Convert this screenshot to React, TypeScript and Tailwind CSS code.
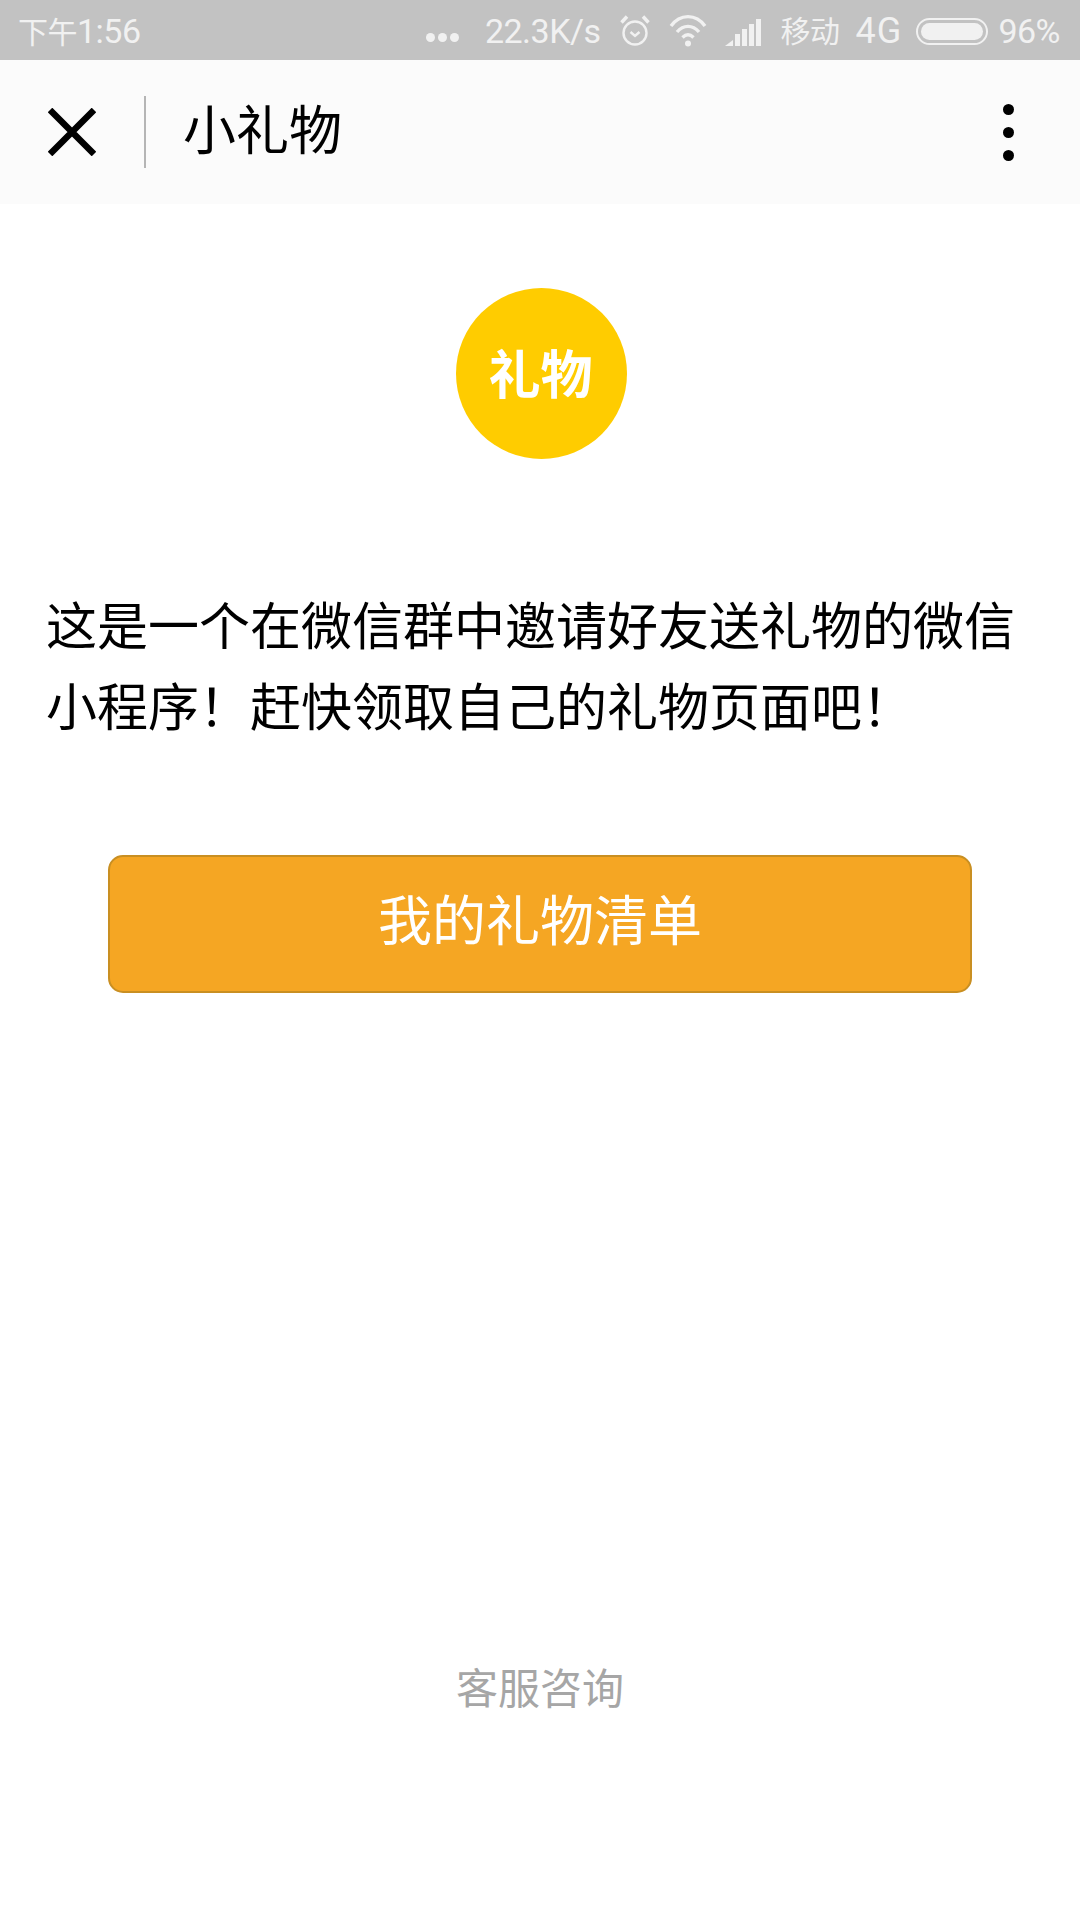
const FONT = "font-['Roboto','Noto_Sans_CJK_SC',sans-serif]";

function AlarmIcon() {
  return (
    <svg viewBox="0 0 32 34" className="w-[32px] h-[34px]" fill="none" stroke="#f1f1f1" strokeWidth="2.4">
      <circle cx="16" cy="19" r="11.5" />
      <path d="M11.5 18l4.500 4 4.500-4" />
      <path d="M2.5 8.500 8 2.500M29.500 8.500 24 2.500" strokeWidth="3.4" />
    </svg>
  );
}

function WifiIcon() {
  return (
    <svg viewBox="0 0 38 34" className="w-[38px] h-[34px]" fill="none" stroke="#f1f1f1" strokeWidth="3.4">
      <path d="M2 12C11-.5 27-.5 36 12" />
      <path d="M8 18c6.500-7.500 15.500-7.500 22 0" />
      <path d="M13.500 23.500c3.500-3.500 7.500-3.500 11 0" />
      <circle cx="19" cy="29.500" r="3" fill="#f1f1f1" stroke="none" />
    </svg>
  );
}

function SignalIcon() {
  return (
    <svg viewBox="0 0 38 34" className="w-[38px] h-[34px]" fill="#f1f1f1">
      <path d="M0 32 8 26V32Z" />
      <rect x="10" y="20" width="5" height="12" />
      <rect x="17" y="15" width="5" height="17" />
      <rect x="24" y="10" width="5" height="22" />
      <rect x="31" y="5" width="5" height="27" />
    </svg>
  );
}

function Battery() {
  return (
    <div className="w-[72px] h-[27px] rounded-full border-2 border-[#f1f1f1] p-[3px]">
      <div className="w-full h-full rounded-full bg-[#f1f1f1]" />
    </div>
  );
}

export default function App() {
  return (
    <div className={`${FONT} w-[1080px] h-[1920px] bg-white flex flex-col`}>
      {/* Status bar */}
      <div className="h-[60px] bg-[#c2c2c2] flex items-center justify-between pl-[18px] pr-[20px] pt-[2px] text-[#f1f1f1] text-[34px] tracking-[-0.5px]">
        <span>
          <span className="text-[30px]">下午</span>1:56
        </span>
        <div className="flex items-center">
          <div className="flex gap-[3px] mr-[26px] mt-[12px]">
            <span className="w-[9px] h-[9px] rounded-full bg-[#f1f1f1]" />
            <span className="w-[9px] h-[9px] rounded-full bg-[#f1f1f1]" />
            <span className="w-[9px] h-[9px] rounded-full bg-[#f1f1f1]" />
          </div>
          <span className="mr-[18px]">22.3K/s</span>
          <div className="mr-[18px]"><AlarmIcon /></div>
          <div className="mr-[18px]"><WifiIcon /></div>
          <div className="mr-[18px]"><SignalIcon /></div>
          <span className="mr-[16px] text-[30px]">移动</span>
          <span className="mr-[14px] text-[36px] tracking-[1px]">4G</span>
          <div className="mr-[10px]"><Battery /></div>
          <span>96%</span>
        </div>
      </div>

      {/* Nav */}
      <div className="h-[144px] bg-[#fbfbfb] flex items-center">
        <svg viewBox="0 0 48 48" className="w-[48px] h-[48px] ml-[48px]" stroke="#000" strokeWidth="6.500">
          <path d="M2 2 46 46M46 2 2 46" />
        </svg>
        <div className="w-[2px] h-[72px] bg-[#b5b5b5] ml-[48px]" />
        <span className="ml-[37px] pt-[2px] text-[53px] text-black">小礼物</span>
        <div className="ml-auto mr-[66px] flex flex-col gap-[12px]">
          <span className="w-[11px] h-[11px] rounded-full bg-black" />
          <span className="w-[11px] h-[11px] rounded-full bg-black" />
          <span className="w-[11px] h-[11px] rounded-full bg-black" />
        </div>
      </div>

      {/* Content */}
      <div className="flex flex-col items-center flex-1">
        <div className="mt-[84px] ml-[3px] w-[171px] h-[171px] rounded-full bg-[#ffcc00] flex items-center justify-center pt-[6px] pr-[2px] text-white font-bold text-[52px]">
          礼物
        </div>
        <p className="mt-[128px] w-full pl-[46px] pr-[46px] text-[51px] leading-[81px] text-black">
          这是一个在微信群中邀请好友送礼物的微信小程序！赶快领取自己的礼物页面吧！
        </p>
        <button className="mt-[106px] w-[864px] h-[138px] rounded-[15px] border-2 border-[#c98f22] bg-[#f5a623] pb-[3px] text-white text-[54px]">
          我的礼物清单
        </button>
        <span className="mt-[665px] text-[42px] text-[#a6a6a6]">客服咨询</span>
      </div>
    </div>
  );
}
